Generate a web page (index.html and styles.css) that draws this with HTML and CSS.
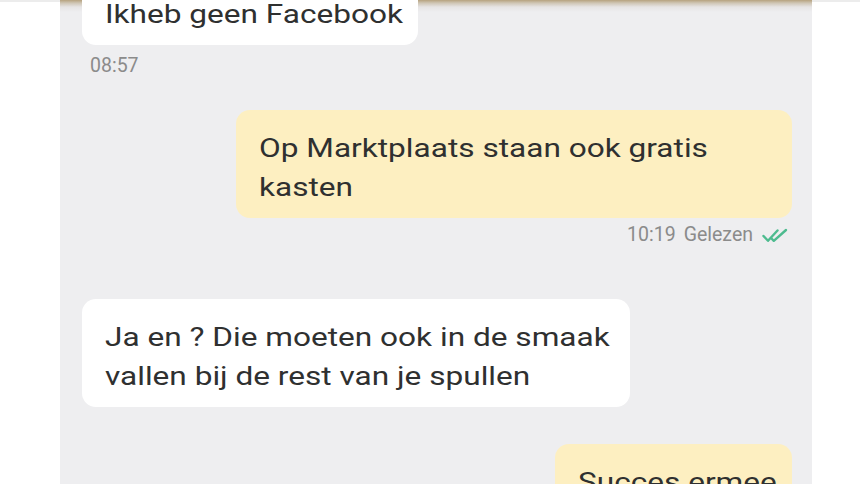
FILE: index.html
```html
<!DOCTYPE html>
<html lang="nl">
<head>
<meta charset="utf-8">
<title>Chat</title>
<link rel="stylesheet" href="styles.css">
</head>
<body>
<div class="page">
  <div class="gutter"></div>
  <main class="chat">
    <div class="bubble in first"><span class="txt">Ikheb geen Facebook</span></div>
    <div class="time">08:57</div>
    <div class="bubble out wide"><span class="txt">Op Marktplaats staan ook gratis<br>kasten</span></div>
    <div class="meta">
      <span>10:19</span><span>Gelezen</span>
      <svg class="ticks" width="27" height="15" viewBox="0 0 27 15" aria-hidden="true">
        <path d="M1.5 8 L6 12.8 L15.5 2.5" fill="none" stroke="#4dbb8f" stroke-width="2.4" stroke-linecap="round" stroke-linejoin="round"/>
        <path d="M9.5 10.5 L11.8 12.8 L24 2" fill="none" stroke="#4dbb8f" stroke-width="2.4" stroke-linecap="round" stroke-linejoin="round"/>
      </svg>
    </div>
    <div class="bubble in third"><span class="txt">Ja en ? Die moeten ook in de smaak<br>vallen bij de rest van je spullen</span></div>
    <div class="bubble out last"><span class="txt">Succes ermee</span></div>
  </main>
  <div class="gutter"></div>
</div>
</body>
</html>
```
FILE: styles.css
```css
html, body {
  margin: 0;
  padding: 0;
  background: #ffffff;
  height: 484px;
  overflow: hidden;
}
.page {
  display: flex;
  height: 484px;
  font-family: Roboto, "Noto Sans", sans-serif;
}
.gutter {
  flex: 1;
  border-top: 2px solid #ececec;
}
.gutter:first-child {
  flex: 0 0 60px;
}
.chat {
  flex: 0 0 752px;
  box-sizing: border-box;
  padding: 0 20px 0 22px;
  background: linear-gradient(#b6a27e 0, #cfc5b4 3px, #e6e4e4 7px, #eeeef0 12px);
  display: flex;
  flex-direction: column;
  overflow: hidden;
}
.bubble {
  box-sizing: border-box;
  padding: 19px 22px 11px 23px;
  border-radius: 14px;
  font-size: 26px;
  line-height: 39px;
  color: #2f3030;
  flex-shrink: 0;
  white-space: nowrap;
}
.txt {
  display: inline-block;
  transform: scaleX(1.215);
  transform-origin: left center;
}
.in {
  background: #ffffff;
  align-self: flex-start;
}
.out {
  background: #fdefc1;
  align-self: flex-end;
}
.first {
  margin-top: -24px;
  width: 336px;
}
.time {
  margin: 9px 0 0 8px;
  font-size: 19.5px;
  line-height: 24px;
  color: #8b8b8b;
}
.wide {
  margin-top: 32px;
  width: 556px;
}
.meta {
  align-self: flex-end;
  display: flex;
  align-items: center;
  gap: 8px;
  margin: 5px 3px 0 0;
  font-size: 19.5px;
  line-height: 24px;
  color: #8b8b8b;
}
.ticks {
  margin-left: 1px;
}
.third {
  margin-top: 52px;
  width: 548px;
}
.last {
  margin-top: 37px;
  width: 237px;
}
```
